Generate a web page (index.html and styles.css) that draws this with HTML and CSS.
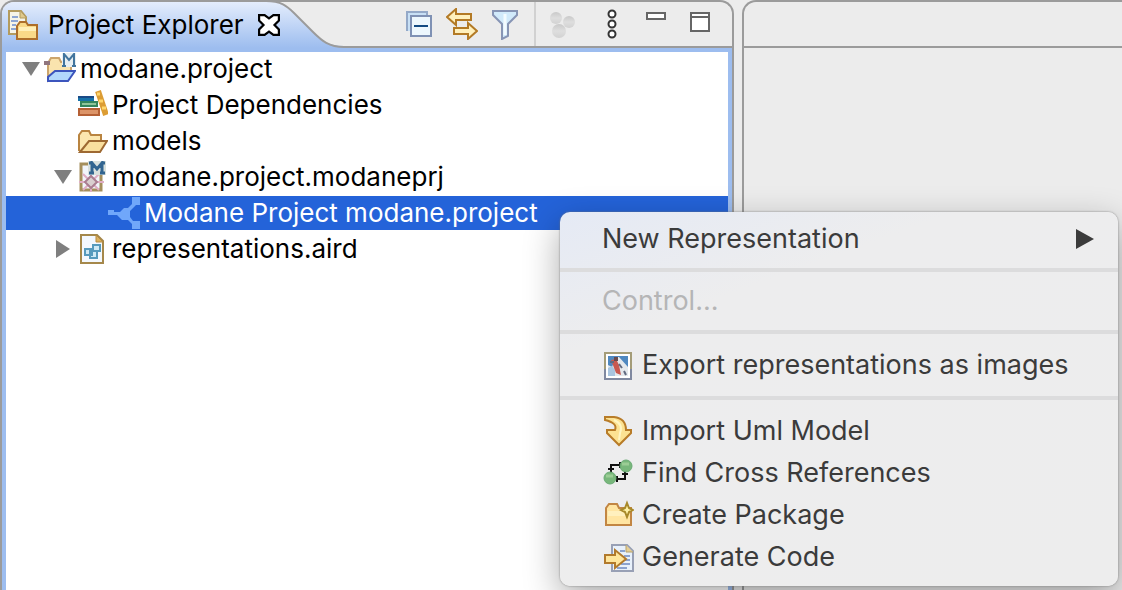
FILE: index.html
```html
<!DOCTYPE html>
<html lang="en">
<head>
<meta charset="utf-8">
<title>Project Explorer</title>
<link rel="stylesheet" href="styles.css">
</head>
<body>
<div class="workbench">
  <section class="view explorer" aria-label="Project Explorer">
    <header class="view-header">
      <div class="tab">
        <svg class="tab-shape" viewBox="0 0 344 48" aria-hidden="true">
          <defs><linearGradient id="tabFill" x1="0" y1="0" x2="0" y2="1"><stop offset="0" stop-color="#e7effd"/><stop offset="1" stop-color="#9dbdef"/></linearGradient></defs>
          <path d="M0 0H268C282 1 287 6 294 13L313 32C322 41 328 46 344 46V48H0Z" fill="url(#tabFill)"/>
          <path d="M266 1C281 1 287 6 294 13L313 32C322 41 329 47 344 47" fill="none" stroke="#9b9b9b" stroke-width="2"/>
        </svg>
        <svg class="tab-icon" viewBox="0 0 32 32" aria-hidden="true">
          <path d="M3 2H15L20 8V25H3Z" fill="#f6f4e8" stroke="#b39b5e" stroke-width="2"/><path d="M14 2V9H20" fill="#dfc98b" stroke="#b39b5e"/>
          <path d="M6 8h6M5 12h7M6 16h4M5 20h5" stroke="#8ea6d4" stroke-width="2"/>
          <path d="M11 30V17L14 13H20L22 16H31V30Z" fill="#f9d988" stroke="#ad6e2b" stroke-width="2"/><path d="M13 18H30V22H13Z" fill="#fff0b9"/>
        </svg>
        <h1 class="tab-title">Project Explorer</h1>
        <button class="tab-close" aria-label="Close"><svg viewBox="0 0 20 20"><path d="M1 1H6L10 4L14 1H19V6L15 10L19 14V19H14L10 16L6 19H1V14L5 10L1 6Z" fill="#fff" stroke="#000" stroke-width="2"/></svg></button>
      </div>
      <div class="toolbar">
        <button aria-label="Collapse all"><svg viewBox="0 0 32 32"><path d="M5 23V4H25V8" fill="#cfe3f6" stroke="#94a9c8" stroke-width="2"/><path d="M6 5H24V23H6Z" fill="#c8e0f5"/><path d="M9 8H29V28H9Z" fill="#edf7fd" stroke="#7f91b4" stroke-width="2"/><path d="M12 18H26" stroke="#134a82" stroke-width="2"/></svg></button>
        <button aria-label="Link with editor"><svg viewBox="0 0 32 32"><path d="M1 9L10 1V6H25V12H10V17Z M31 23L22 15V20H8V26H22V31Z" fill="#fff0bc" stroke="#b37a25" stroke-width="2"/></svg></button>
        <button aria-label="Filters"><svg viewBox="0 0 32 32"><path d="M3 3H27V7L18 16V28L12 31V16L3 7Z" fill="#d1eafb" stroke="#8795b5" stroke-width="2"/><path d="M15 6V27" stroke="#f3fbff" stroke-width="3"/></svg></button>
        <span class="divider"></span>
        <button class="focus" aria-label="Focus on active task" disabled><svg viewBox="0 0 32 32"><defs><linearGradient id="ball" x1="0" y1="0" x2="0" y2="1"><stop stop-color="#c9c9c9"/><stop offset=".5" stop-color="#dedede"/><stop offset="1" stop-color="#d2d2d2"/></linearGradient></defs><circle cx="10" cy="10" r="6" fill="url(#ball)"/><circle cx="23" cy="14" r="6" fill="url(#ball)"/><circle cx="13" cy="23" r="7" fill="url(#ball)"/></svg></button>
        <button class="more" aria-label="View menu"><svg viewBox="0 0 32 32"><g fill="#fff" stroke="#333" stroke-width="2"><circle cx="16" cy="6" r="3.5"/><circle cx="16" cy="16" r="3.5"/><circle cx="16" cy="26" r="3.5"/></g></svg></button>
        <button class="minimize" aria-label="Minimize"><svg viewBox="0 0 32 32"><path d="M7 5H25V11H7Z" fill="#fff" stroke="#666" stroke-width="2"/></svg></button>
        <button class="maximize" aria-label="Maximize"><svg viewBox="0 0 32 32"><path d="M7 5H25V23H7ZM7 9H25" fill="#fff" stroke="#666" stroke-width="2"/></svg></button>
      </div>
    </header>
    <ul class="tree" role="tree">
      <li class="row level-1" role="treeitem" aria-expanded="true">
        <span class="arrow"><svg viewBox="0 0 18 16"><path d="M0 1H18L9 15Z"/></svg></span>
        <svg class="icon" viewBox="0 0 32 32"><path d="M4 27V10L7 5H15L17 9H27V18H12Z" fill="#fae4ae" stroke="#cca56c" stroke-width="2"/><path d="M0 8H6V12H0Z" fill="#90757d"/><path d="M4 28V24L11 18H31L24 28Z" fill="#b2d8fb" stroke="#3c55bd" stroke-width="2"/><path d="M18 0H32V14H18Z" fill="#e8eff2"/><path d="M18 13H22M20 13V1L25 7L30 1V13M28 13H32" fill="none" stroke="#42759e" stroke-width="2"/></svg>
        <span>modane.project</span>
      </li>
      <li class="row level-2" role="treeitem">
        <span class="arrow"></span>
        <svg class="icon" viewBox="0 0 32 32"><path d="M2 8H18V12H2Z" fill="#1772a9"/><path d="M2 8H18" stroke="#1b4a86" stroke-width="2"/><path d="M4 12H22V18H4Z" fill="#34855d"/><path d="M6 15H20" stroke="#8fc49a" stroke-width="2"/><path d="M2 19H24V27H2Z" fill="#b56035"/><path d="M4 23H22" stroke="#dc9468" stroke-width="4"/><path d="M22 2L26 14L30 26" fill="none" stroke="#dc9d34" stroke-width="6"/><path d="M21 5H24M23 12H27M26 19H30" stroke="#ffd66b" stroke-width="3"/></svg>
        <span>Project Dependencies</span>
      </li>
      <li class="row level-2" role="treeitem">
        <span class="arrow"></span>
        <svg class="icon" viewBox="0 0 32 32"><path d="M3 26V10L6 6H13L15 10H25V16" fill="#fce7af" stroke="#b98440" stroke-width="2"/><path d="M4 27L13 16H31L24 27Z" fill="#f9df9e" stroke="#9e6932" stroke-width="2"/></svg>
        <span>models</span>
      </li>
      <li class="row level-2" role="treeitem" aria-expanded="true">
        <span class="arrow"><svg viewBox="0 0 18 16"><path d="M0 1H18L9 15Z"/></svg></span>
        <svg class="icon" viewBox="0 0 32 32"><path d="M5 3H25V29H5Z" fill="#f1f5fb" stroke="#a58f5c" stroke-width="3"/><path d="M3 21H28M15 10V31M7 13L23 29M23 13L7 29" fill="none" stroke="#dfadc4" stroke-width="2"/><path d="M15 15L21 21L15 27L9 21Z" fill="#d9cfd0" stroke="#a97d90" stroke-width="2"/><path d="M12 0H30V14H12Z" fill="#d9e1dd"/><path d="M16 13V2L21 8L26 2V13M13 12H18M24 12H29M13 2H17M25 2H29" fill="none" stroke="#326590" stroke-width="3"/></svg>
        <span>modane.project.modaneprj</span>
      </li>
      <li class="row level-3 selected" role="treeitem" aria-selected="true">
        <span class="arrow"></span>
        <svg class="icon" viewBox="0 0 32 32"><path d="M0 13H6V15H12L16 11H20L24 7V0H32V8H28L22 14V20L25 24H32V32H24V27L20 23H14L9 18H0Z" fill="#70a7fa"/></svg>
        <span>Modane Project modane.project</span>
      </li>
      <li class="row level-2" role="treeitem" aria-expanded="false">
        <span class="arrow"><svg viewBox="0 0 16 18"><path d="M1 0V18L15 9Z"/></svg></span>
        <svg class="icon" viewBox="0 0 32 32"><path d="M5 2H21L27 8V30H5Z" fill="#f3f8fe" stroke="#a5884b" stroke-width="2"/><path d="M20 2V9H27Z" fill="#dcb15f" stroke="#b58b42"/><path d="M9 16H16V22H9ZM17 12H24V18H17ZM14 18H21V25H14Z" fill="#cfe9f5" stroke="#569abd" stroke-width="2"/></svg>
        <span>representations.aird</span>
      </li>
    </ul>
  </section>
  <section class="view editor" aria-label="Editor area"><header class="view-header"></header></section>
</div>
<div class="menu" role="menu">
  <button class="menu-item plain" role="menuitem"><span>New Representation</span><svg class="submenu" viewBox="0 0 18 20"><path d="M0 0V20L18 10Z"/></svg></button>
  <hr>
  <button class="menu-item plain" role="menuitem" disabled>Control...</button>
  <hr>
  <button class="menu-item" role="menuitem"><svg class="icon" viewBox="0 0 32 32"><path d="M3 4H29V30H3Z" fill="#fff" stroke="#8089a0" stroke-width="2"/><path d="M3 20V4H29V20" fill="none" stroke="#a49c78" stroke-width="2"/><path d="M6 7H26V27H6Z" fill="#4f88c0"/><path d="M6 16L10 18L14 8H17L26 18V27H6Z" fill="#e4e8ec"/><path d="M6 19L10 17L13 21V27H6Z" fill="#a9c5df"/><path d="M9 11L14 10L17 16L19 26L14 24Z" fill="#c9584f"/><path d="M12 8H16V12H12Z" fill="#6a4a4c"/><path d="M8 13H12M17 15L20 19M22 22L24 26" stroke="#626a80" stroke-width="2"/></svg><span>Export representations as images</span></button>
  <hr>
  <button class="menu-item" role="menuitem"><svg class="icon" viewBox="0 0 32 32"><path d="M3 2H12C21 3 24 8 24 15H29V18L17 30L5 18V15H13C15 10 11 7 3 5Z" fill="#fce292" stroke="#b87c28" stroke-width="2"/><path d="M12 5C19 8 20 13 18 18L17 25" fill="none" stroke="#fff5c2" stroke-width="2"/></svg><span>Import Uml Model</span></button>
  <button class="menu-item" role="menuitem"><svg class="icon" viewBox="0 0 32 32"><path d="M9 18V8H19M23 14V22H14M6 12H12M20 17H26M15 19V25M18 5V11" fill="none" stroke="#111" stroke-width="2"/><circle cx="24" cy="9" r="6" fill="#78b77b" stroke="#6aaa74"/><circle cx="8" cy="21" r="6" fill="#78b77b" stroke="#6aaa74"/><path d="M20 7H27M4 19H11" stroke="#9bcd95" stroke-width="3"/></svg><span>Find Cross References</span></button>
  <button class="menu-item" role="menuitem"><svg class="icon" viewBox="0 0 32 32"><path d="M4 26V9L7 5H15L17 9H29V26Z" fill="#ffe5a2" stroke="#c28643" stroke-width="2"/><path d="M6 12H27V17H6Z" fill="#fff0be"/><path d="M25 4L27 9L31 11L27 13L25 18L23 13L19 11L23 9Z" fill="#fff2a6" stroke="#a88929" stroke-width="2"/></svg><span>Create Package</span></button>
  <button class="menu-item" role="menuitem"><svg class="icon" viewBox="0 0 32 32"><path d="M10 4H25L31 10V30H10Z" fill="#e8f1fb" stroke="#98a0b5" stroke-width="2"/><path d="M24 4V11H31" fill="#e7cf93" stroke="#b3a06e"/><path d="M18 10H23M22 15H28M22 19H28M19 23H28M15 27H25" stroke="#8ba3d0" stroke-width="2"/><path d="M3 14H13V9L24 18L13 27V22H3Z" fill="#ffe69c" stroke="#b27a2c" stroke-width="2"/></svg><span>Generate Code</span></button>
</div>
</body>
</html>
```
FILE: styles.css
```css
* { box-sizing: border-box; }
html, body { height: 100%; }
body {
  margin: 0;
  overflow: hidden;
  background: #ececec;
  color: #000;
  font: 26px/34px Inter, "Liberation Sans", sans-serif;
}
button {
  padding: 0;
  border: 0;
  background: none;
  color: inherit;
  font: inherit;
}
svg { display: block; flex: none; }
.workbench {
  display: grid;
  grid-template-columns: 734fr 380fr;
  gap: 8px;
  height: 100%;
}
.view {
  display: flex;
  flex-direction: column;
  min-width: 0;
  border: 2px solid #9b9b9b;
  border-bottom: 0;
  border-radius: 14px 14px 0 0;
  overflow: hidden;
}
.editor { border-right: 0; border-top-right-radius: 0; }
.view-header {
  display: flex;
  justify-content: space-between;
  height: 46px;
  border-bottom: 2px solid #9b9b9b;
}
.tab {
  position: relative;
  display: flex;
  align-items: center;
  width: 342px;
  height: 46px;
  padding-left: 4px;
}
.tab-shape {
  position: absolute;
  top: -2px;
  left: -2px;
  width: 344px;
  height: 48px;
}
.tab-icon { position: relative; width: 32px; height: 32px; }
.tab-title {
  position: relative;
  margin: 0 0 0 10px;
  font-size: 26px;
  font-weight: 400;
  white-space: nowrap;
}
.tab-close { position: relative; margin-left: 14px; }
.tab-close svg { width: 22px; height: 22px; }
.toolbar { display: flex; align-items: center; padding-right: 16px; }
.toolbar button { width: 32px; margin-right: 12px; }
.toolbar svg { width: 32px; height: 32px; }
.divider { width: 2px; height: 44px; background: #d1d1d1; }
.toolbar .focus { margin: 0 18px 0 10px; }
.toolbar .maximize { margin-right: 0; }
.tree {
  display: flex;
  flex: 1;
  flex-direction: column;
  gap: 2px;
  margin: 0;
  padding: 0;
  border: 4px solid #9dbdef;
  border-bottom: 0;
  background: #fff;
  list-style: none;
}
.row { display: flex; align-items: center; height: 34px; white-space: nowrap; }
.level-1 { padding-left: 12px; }
.level-2 { padding-left: 44px; }
.level-3 { padding-left: 76px; }
.arrow { display: flex; justify-content: center; width: 26px; }
.arrow svg { width: 18px; height: 18px; fill: #7f7f7f; }
.icon { width: 32px; height: 32px; margin-right: 4px; }
.selected { background: #2463d9; color: #fff; }
.menu {
  position: absolute;
  top: 212px;
  left: 560px;
  width: 558px;
  padding: 8px 0;
  border-radius: 10px;
  background: linear-gradient(160deg, #e5eaf5 0, #ededee 25%, #ededed);
  box-shadow: 0 0 2px #777, 0 12px 36px #0005;
  color: #3b3b3b;
  font-size: 27px;
}
.menu-item {
  display: flex;
  align-items: center;
  width: 100%;
  height: 42px;
  padding: 0 24px 0 42px;
  text-align: left;
  white-space: nowrap;
}
.menu-item .icon { margin-right: 8px; }
.plain { justify-content: space-between; height: 38px; }
.menu-item:disabled { color: #b5b5b6; }
.submenu { width: 18px; height: 20px; fill: #3b3b3b; }
hr { height: 4px; margin: 10px 0; border: 0; background: #dcdcdd; }
```
